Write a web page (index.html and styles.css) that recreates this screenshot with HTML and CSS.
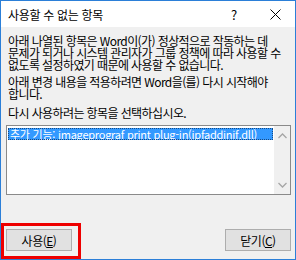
FILE: index.html
```html
<!DOCTYPE html>
<html lang="ko">

<head>
    <meta charset="UTF-8">
    <title>사용할 수 없는 항목</title>
    <link rel="stylesheet" href="styles.css">
</head>

<body>

    <div class="dialog">
        <div class="title-bar">
            <span class="title">사용할 수 없는 항목</span>
            <span class="help">?</span>
            <span class="close">
                <svg width="11" height="11" viewBox="0 0 11 11">
                    <path d="M0.5 0.5 L10.5 10.5 M10.5 0.5 L0.5 10.5" stroke="#000" stroke-width="1" fill="none" />
                </svg>
            </span>
        </div>

        <div class="dialog-body">
            <div class="msg msg-first">
                <span class="line">아래 나열된 항목은 Word이(가) 정상적으로 작동하는 데</span>
                <span class="line">문제가 되거나 시스템 관리자가 그룹 정책에 따라 사용할 수</span>
                <span class="line">없도록 설정하였기 때문에 사용할 수 없습니다.</span>
            </div>
            <div class="msg msg-second">
                <span class="line">아래 변경 내용을 적용하려면 Word을(를) 다시 시작해야</span>
                <span class="line">합니다.</span>
            </div>
            <div class="msg msg-third">
                <span class="line">다시 사용하려는 항목을 선택하십시오.</span>
            </div>

            <div class="list-box">
                <div class="list-items">
                    <div class="list-item selected">추가 기능: imageprograf print plug-in(ipfaddinif.dll)</div>
                </div>
                <div class="scrollbar">
                    <svg width="9" height="6" viewBox="0 0 9 6">
                        <path d="M0.5 5 L4.5 1 L8.5 5" stroke="#a6a6a6" stroke-width="1.3" fill="none" />
                    </svg>
                    <svg width="9" height="6" viewBox="0 0 9 6">
                        <path d="M0.5 1 L4.5 5 L8.5 1" stroke="#a6a6a6" stroke-width="1.3" fill="none" />
                    </svg>
                </div>
            </div>

            <div class="button-row">
                <button class="btn">사용(<u>E</u>)</button>
                <button class="btn">닫기(<u>C</u>)</button>
            </div>
        </div>

        <div class="highlight"></div>
    </div>

</body>

</html>
```

FILE: styles.css
```css
body {
    margin: 0;
    font-family: "Noto Sans CJK KR", "Noto Sans", sans-serif;
    font-size: 12px;
}

.dialog {
    position: relative;
    width: 296px;
    height: 260px;
    box-sizing: border-box;
    border: 1px solid #2b7fd8;
    background: #f0f0f0;
    display: flex;
    flex-direction: column;
}

.title-bar {
    height: 26px;
    background: #fff;
    display: flex;
    align-items: center;
    padding-left: 7px;
}

.title {
    flex: 1;
    font-size: 12px;
    letter-spacing: -0.3px;
    color: #000;
}

.help {
    width: 12px;
    text-align: center;
    font-size: 13px;
    margin-right: 30px;
}

.close {
    display: flex;
    margin-right: 14px;
}

.dialog-body {
    flex: 1;
    display: flex;
    flex-direction: column;
    padding: 8px 4px 0 5px;
}

.msg {
    margin-left: 2px;
    letter-spacing: -0.6px;
    color: #000;
    white-space: nowrap;
}

.msg .line {
    display: block;
    height: 12px;
    line-height: 12px;
}

.msg-second {
    margin-top: 5px;
}

.msg-third {
    margin-top: 7px;
}

.list-box {
    margin-top: 6px;
    height: 70px;
    box-sizing: border-box;
    border: 1px solid #8a8a8a;
    background: #fff;
    display: flex;
}

.list-items {
    flex: 1;
    padding: 2px 1px 0 1px;
}

.list-item {
    height: 12px;
    line-height: 12px;
    padding-left: 2px;
    font-size: 11px;
    letter-spacing: -0.25px;
    white-space: nowrap;
}

.list-item.selected {
    background: #3399ff;
    color: #fff;
    outline: 1px dotted #1a4a80;
    outline-offset: -1px;
}

.scrollbar {
    width: 16px;
    background: #f0f0f0;
    display: flex;
    flex-direction: column;
    justify-content: space-between;
    align-items: center;
    padding: 7px 0 6px;
}

.button-row {
    margin-top: 34px;
    display: flex;
    justify-content: space-between;
}

.btn {
    width: 66px;
    height: 22px;
    box-sizing: border-box;
    border: 1px solid #adadad;
    background: #e1e1e1;
    font-family: "Noto Sans CJK KR", "Noto Sans", sans-serif;
    font-size: 12px;
    letter-spacing: -0.5px;
    color: #000;
    padding: 0;
}

.highlight {
    position: absolute;
    left: 0;
    top: 222px;
    width: 80px;
    height: 36px;
    box-sizing: border-box;
    border: 3px solid #ee0000;
}
```
